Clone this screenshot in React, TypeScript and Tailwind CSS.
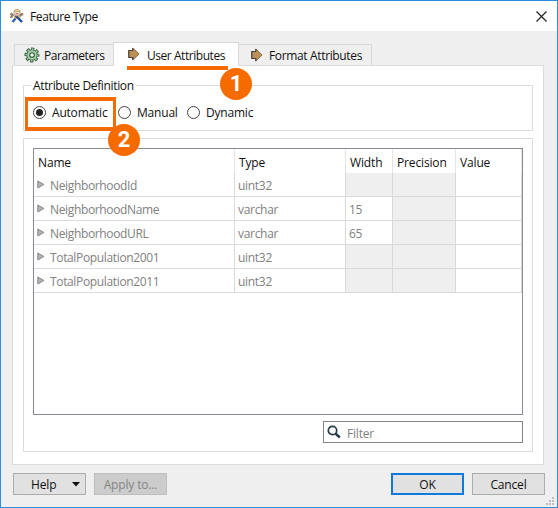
import React, { FC, ReactNode } from 'react';
import { clsx } from 'clsx';

interface AttributeRow {
  name: string;
  type: string;
  width?: string;
}

const ROWS: AttributeRow[] = [
  { name: 'NeighborhoodId', type: 'uint32' },
  { name: 'NeighborhoodName', type: 'varchar', width: '15' },
  { name: 'NeighborhoodURL', type: 'varchar', width: '65' },
  { name: 'TotalPopulation2001', type: 'uint32' },
  { name: 'TotalPopulation2011', type: 'uint32' },
];

const HEADERS = ['Name', 'Type', 'Width', 'Precision', 'Value'];

const COLUMNS = 'grid grid-cols-[201px_111px_47px_63px_66px] h-6';

const AppIcon: FC = () => (
  <svg width="16" height="16" viewBox="0 0 16 16" className="shrink-0">
    <path d="M1.500 5.500l3 2.500M14 5.500L10.500 8" stroke="#9a7d68" strokeWidth="2.600" />
    <path d="M5 8l6-.5.5 3.500H5z" fill="#f0c04a" />
    <path d="M6.500 10.500l-3 3.500" stroke="#2f62b8" strokeWidth="2.400" />
    <path d="M6.500 7.500l6.500 6.500" stroke="#2448a8" strokeWidth="2.400" />
    <circle cx="8" cy="4.800" r="3.200" fill="#f4e6da" stroke="#8d827a" strokeWidth=".7" />
    <path d="M5 3.600C5.500.6 10.500.6 11 3.600z" fill="#f3d787" stroke="#9b8a5c" strokeWidth=".6" />
    <path d="M6.500 5.800h3" stroke="#cc4b35" strokeWidth="1" />
    <path d="M1 9.500l2.500-1" stroke="#777" strokeWidth="1.400" />
  </svg>
);

const GearIcon: FC = () => (
  <svg width="16" height="16" viewBox="0 0 16 16" className="shrink-0">
    <circle cx="8" cy="8" r="6.300" fill="none" stroke="#35573f" strokeWidth="2.400" strokeDasharray="3.200 1.748" strokeDashoffset="1.600" />
    <circle cx="8" cy="8" r="5.300" fill="#a3d3a4" stroke="#35573f" strokeWidth="1" />
    <circle cx="8" cy="8" r="5.800" fill="none" stroke="#a3d3a4" strokeWidth="1.600" strokeDasharray="1.600 2.955" strokeDashoffset=".8" />
    <circle cx="8" cy="8" r="2.300" fill="#f4f8f4" stroke="#35573f" strokeWidth="1.100" />
  </svg>
);

const ArrowIcon: FC<{ className?: string }> = ({ className }) => (
  <svg width="12" height="14" viewBox="0 0 12 14" className={clsx('shrink-0', className)}>
    <path d="M.8 3.500h4V1l6.300 6-6.300 6v-2.500h-4z" fill="#bd9055" stroke="#8a6d49" />
    <path d="M4.800 1v2.500h-4v7h4V13" fill="none" stroke="#49433d" strokeWidth="1.100" />
  </svg>
);

// The line box is taller than the element, which drops the glyphs by one pixel
const Label: FC<{ className?: string; children: ReactNode }> = ({ className, children }) => (
  <span className={clsx('block h-4 leading-[18px]', className)}>{children}</span>
);

const Badge: FC<{ className: string; children: ReactNode }> = ({ className, children }) => (
  <span
    className={clsx(
      'absolute z-10 flex size-8 items-center justify-center rounded-full bg-[#f56b00] font-[Roboto,sans-serif] text-[22px] font-bold tracking-normal text-white',
      className,
    )}
  >
    {children}
  </span>
);

const Radio: FC<{ label: string; checked?: boolean; className?: string }> = ({ label, checked, className }) => (
  <label className={clsx('flex items-center gap-[6px]', className)}>
    <span className="flex size-[13px] items-center justify-center rounded-full border border-[#444] bg-white">
      {checked && <span className="size-[7px] rounded-full bg-[#222]" />}
    </span>
    <Label className="tracking-[-0.2px]">{label}</Label>
  </label>
);

const TableRow: FC<{ row: AttributeRow }> = ({ row }) => {
  const cell = 'flex items-center border-r border-b border-[#d9d9d9]';
  return (
    <div className={clsx(COLUMNS, 'text-[#808080]')}>
      <div className={clsx(cell, 'pl-[3px]')}>
        <svg width="8" height="9" viewBox="0 0 8 9" className="mr-[5px]">
          <path d="M.8 1v7l6-3.500z" fill="#b5b5b5" stroke="#858585" />
        </svg>
        <Label className="tracking-[-0.35px]">{row.name}</Label>
      </div>
      <div className={clsx(cell, 'pl-[3px]')}>
        <Label className="tracking-[-0.3px]">{row.type}</Label>
      </div>
      <div className={clsx(cell, 'pl-[3px]', !row.width && 'bg-[#efefef]')}>
        {row.width && <Label className="tracking-[-0.4px]">{row.width}</Label>}
      </div>
      <div className={clsx(cell, 'bg-[#efefef]')} />
      <div className={cell} />
    </div>
  );
};

const App: FC = () => (
  <div className='relative flex h-[508px] w-[558px] flex-col border border-[#2e8edb] bg-[#efefef] font-["Open_Sans","Noto_Sans",sans-serif] text-[12px] leading-4 whitespace-nowrap text-[#111]'>
    <header className="flex h-[30px] shrink-0 items-center bg-white pr-[10px] pl-2">
      <AppIcon />
      <Label className="ml-[5px] tracking-[-0.4px]">Feature Type</Label>
      <svg width="11" height="11" viewBox="0 0 11 11" className="ml-auto">
        <path d="M.5.5l10 10M10.500.5l-10 10" stroke="#222" strokeWidth="1.200" />
      </svg>
    </header>

    <nav className="z-10 mt-[11px] flex h-[23px] shrink-0 items-end pl-[13px] tracking-[-0.45px]">
      <div className="flex h-[21px] w-[99px] items-center border-t border-l border-[#d9d9d9] pl-[9px]">
        <GearIcon />
        <Label className="ml-1">Parameters</Label>
      </div>
      <div className="relative -mb-px flex h-6 w-[126px] items-center border border-b-0 border-[#d9d9d9] bg-white pl-[14px]">
        <ArrowIcon className="mb-[2px]" />
        <Label className="ml-[7px]">User Attributes</Label>
        <span className="absolute top-[23px] left-[13px] h-[4px] w-[101px] bg-[#f56b00]" />
        <Badge className="top-[25px] left-[106px]">1</Badge>
      </div>
      <div className="flex h-[21px] w-[133px] items-center border-t border-r border-[#d9d9d9] pl-[12px]">
        <ArrowIcon />
        <Label className="ml-[6px] tracking-[-0.35px]">Format Attributes</Label>
      </div>
    </nav>

    <main className="mx-[11px] flex h-[400px] w-[532px] shrink-0 flex-col border border-[#dcdcdc] bg-white px-[10px] pt-[11px]">
      <fieldset className="relative flex h-[54px] w-[510px] shrink-0 flex-col border border-[#dcdcdc]">
        <legend className="ml-[7px] h-4 px-[2px] leading-[18px] tracking-[-0.35px]">Attribute Definition</legend>
        <div className="flex pt-[11px] pl-[9px]">
          <Radio label="Automatic" checked className="w-[85px]" />
          <Radio label="Manual" className="w-[69px]" />
          <Radio label="Dynamic" />
        </div>
        <span className="absolute top-[4px] left-[1px] h-[34px] w-[91px] border-x-3 border-y-4 border-[#f56b00]" />
        <Badge className="top-[31px] left-[84px]">2</Badge>
      </fieldset>

      <section className="mt-[7px] flex h-[314px] w-[510px] shrink-0 flex-col items-end border border-[#dcdcdc] px-[9px] pt-[9px]">
        <div className="h-[267px] w-[490px] shrink-0 border border-[#878c94]">
          <div className={COLUMNS}>
            {HEADERS.map((header) => (
              <div key={header} className="flex items-center border-r border-[#e5e5e5] pt-px pl-1">
                <Label className="tracking-[-0.15px]">{header}</Label>
              </div>
            ))}
          </div>
          {ROWS.map((row) => (
            <TableRow key={row.name} row={row} />
          ))}
        </div>
        <div className="mt-[6px] flex h-[22px] w-[200px] shrink-0 items-center border border-[#858585] pl-[3px] text-[#808080]">
          <svg width="14" height="14" viewBox="0 0 14 14">
            <circle cx="5.500" cy="5.500" r="4.200" fill="none" stroke="#263d48" strokeWidth="1.700" />
            <path d="M8.500 8.500l4.300 4" stroke="#263d48" strokeWidth="2.400" />
          </svg>
          <Label className="mt-px ml-[6px] tracking-[-0.2px]">Filter</Label>
        </div>
      </section>
    </main>

    <footer className="flex pt-2 pl-3 tracking-[-0.15px]">
      <button className="flex h-[22px] w-[73px] items-center border border-[#adadad] bg-[#e1e1e1] pl-[17px]">
        <Label>Help</Label>
        <svg width="8" height="5" viewBox="0 0 8 5" className="mr-[5px] ml-auto">
          <path d="M0 0h8L4 4.500z" fill="#111" />
        </svg>
      </button>
      <button className="ml-2 flex h-[22px] w-[73px] items-center justify-center border border-[#bfbfbf] bg-[#ccc] text-[#858585]">
        <Label>Apply to...</Label>
      </button>
      <button className="ml-[224px] flex h-[22px] w-[73px] items-center justify-center border-2 border-[#0f7adb] bg-[#e1e1e1]">
        <Label>OK</Label>
      </button>
      <button className="ml-2 flex h-[22px] w-[73px] items-center justify-center border border-[#adadad] bg-[#e1e1e1]">
        <Label>Cancel</Label>
      </button>
    </footer>

    <svg width="8" height="8" viewBox="0 0 8 8" className="absolute right-[3px] bottom-[2px]" fill="#bdbdbd">
      <path d="M6 0h2v2H6zM3 3h2v2H3zM6 3h2v2H6zM0 6h2v2H0zM3 6h2v2H3zM6 6h2v2H6z" />
    </svg>
  </div>
);

export default App;
